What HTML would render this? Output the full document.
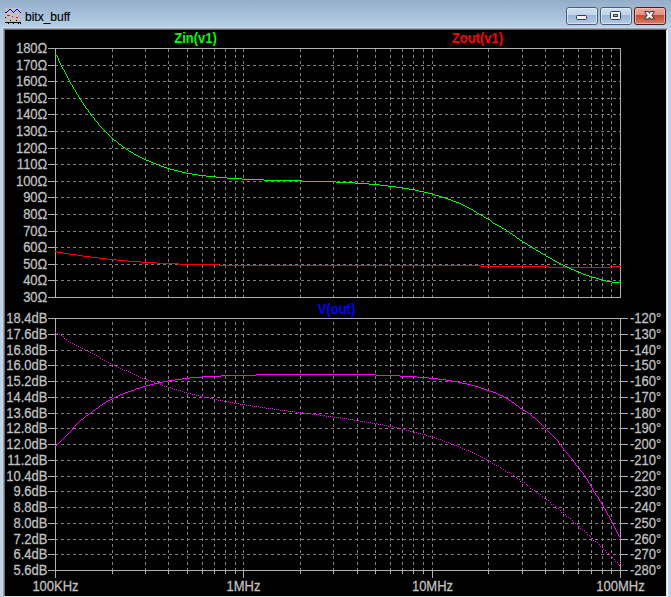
<!DOCTYPE html>
<html><head><meta charset="utf-8"><style>
html,body{margin:0;padding:0;width:671px;height:597px;overflow:hidden;background:#bcd3ea}
svg{position:absolute;left:0;top:0;display:block}
text{font-family:"Liberation Sans",sans-serif}
</style></head><body>
<svg width="671" height="597" viewBox="0 0 671 597">
<defs>
<linearGradient id="tg" x1="0" y1="0" x2="0" y2="1">
<stop offset="0" stop-color="#94adc9"/><stop offset="1" stop-color="#b9d0e8"/>
</linearGradient>
<linearGradient id="bmin" x1="0" y1="0" x2="0" y2="1">
<stop offset="0" stop-color="#cfdff0"/><stop offset="0.45" stop-color="#bfd3ea"/><stop offset="0.46" stop-color="#9ab6d5"/><stop offset="1" stop-color="#b4cbe6"/>
</linearGradient>
<linearGradient id="bcl" x1="0" y1="0" x2="0" y2="1">
<stop offset="0" stop-color="#eaa99b"/><stop offset="0.45" stop-color="#e1907f"/><stop offset="0.46" stop-color="#c14a2e"/><stop offset="1" stop-color="#d8806a"/>
</linearGradient>
</defs>
<rect x="0" y="0" width="671" height="597" fill="#bcd3ea"/>
<rect x="0" y="0" width="671" height="28" fill="url(#tg)"/>
<rect x="2" y="27" width="666" height="570" fill="#c4daf0"/>
<rect x="3" y="28" width="665" height="569" fill="#a0a0a0"/>
<rect x="4" y="29" width="664" height="568" fill="#ffffff"/>
<rect x="4" y="29" width="663" height="567" fill="#696969"/>
<rect x="5" y="30" width="662" height="567" fill="#e3e3e3"/>
<rect x="5" y="30" width="661" height="566" fill="#000"/>
<rect x="5" y="8" width="16" height="16" fill="#c0c0c0"/>
<rect x="6" y="12" width="1" height="1" fill="#0000ff"/>
<rect x="7" y="11" width="1" height="1" fill="#0000ff"/>
<rect x="8" y="10" width="1" height="1" fill="#0000ff"/>
<rect x="9" y="9" width="1" height="1" fill="#0000ff"/>
<rect x="10" y="9" width="1" height="1" fill="#0000ff"/>
<rect x="11" y="10" width="1" height="1" fill="#0000ff"/>
<rect x="12" y="11" width="1" height="1" fill="#0000ff"/>
<rect x="13" y="12" width="1" height="1" fill="#0000ff"/>
<rect x="14" y="11" width="1" height="1" fill="#0000ff"/>
<rect x="15" y="10" width="1" height="1" fill="#0000ff"/>
<rect x="16" y="9" width="1" height="1" fill="#0000ff"/>
<rect x="17" y="9" width="1" height="1" fill="#0000ff"/>
<rect x="18" y="10" width="1" height="1" fill="#0000ff"/>
<rect x="19" y="11" width="1" height="1" fill="#0000ff"/>
<rect x="20" y="12" width="1" height="1" fill="#0000ff"/>
<rect x="5" y="12" width="1" height="1" fill="#000"/>
<rect x="5" y="17" width="1" height="1" fill="#000"/>
<rect x="7" y="15" width="1" height="1" fill="#ff0000"/>
<rect x="8" y="15" width="1" height="1" fill="#ff0000"/>
<rect x="9" y="15" width="1" height="1" fill="#ff0000"/>
<rect x="12" y="16" width="1" height="1" fill="#ff0000"/>
<rect x="16" y="17" width="1" height="1" fill="#ff0000"/>
<rect x="17" y="17" width="1" height="1" fill="#ff0000"/>
<rect x="10" y="20" width="1" height="1" fill="#000080"/>
<rect x="16" y="20" width="1" height="1" fill="#000080"/>
<rect x="5" y="22" width="16" height="1" fill="#000"/>
<rect x="8" y="23" width="1" height="1" fill="#000"/>
<rect x="13" y="23" width="1" height="1" fill="#000"/>
<rect x="18" y="23" width="1" height="1" fill="#000"/>
<rect x="20" y="23" width="1" height="1" fill="#000"/>
<text x="25" y="21" font-size="12" fill="#000" stroke="#000" stroke-width="0.15">bitx_buff</text>
<g>
<rect x="566.5" y="7.5" width="31" height="17" rx="2.5" fill="url(#bmin)" stroke="#4d5b70"/>
<rect x="567.5" y="8.5" width="29" height="15" rx="1.5" fill="none" stroke="#e4eef8" stroke-opacity="0.7"/>
<rect x="600.5" y="7.5" width="31" height="17" rx="2.5" fill="url(#bmin)" stroke="#4d5b70"/>
<rect x="601.5" y="8.5" width="29" height="15" rx="1.5" fill="none" stroke="#e4eef8" stroke-opacity="0.7"/>
<rect x="634.5" y="7.5" width="31" height="17" rx="2.5" fill="url(#bcl)" stroke="#4a1a1e"/>
<rect x="635.5" y="8.5" width="29" height="15" rx="1.5" fill="none" stroke="#f4c8bd" stroke-opacity="0.7"/>
</g>
<rect x="576.5" y="15.5" width="10" height="4" rx="1" fill="#f2f2f0" stroke="#333a48"/>
<rect x="610.5" y="11.5" width="10" height="8" rx="1" fill="#f2f2f0" stroke="#333a48"/>
<rect x="613.5" y="14.5" width="4" height="2" fill="#9ab6d5" stroke="#333a48"/>
<path d="M645.3 12L648.3 12L649.5 13.9L650.7 12L653.7 12L651.3 15.3L653.7 18.6L650.7 18.6L649.5 16.7L648.3 18.6L645.3 18.6L647.7 15.3Z" fill="#f6f6f4" stroke="#3a3440" stroke-width="1.8" stroke-linejoin="round" paint-order="stroke"/>
<g shape-rendering="crispEdges" fill="none">
<path d="M55 65.5H620" stroke="#808080" stroke-dasharray="3 3"/>
<path d="M55 81.5H620" stroke="#808080" stroke-dasharray="3 3"/>
<path d="M55 98.5H620" stroke="#808080" stroke-dasharray="3 3"/>
<path d="M55 114.5H620" stroke="#808080" stroke-dasharray="3 3"/>
<path d="M55 131.5H620" stroke="#808080" stroke-dasharray="3 3"/>
<path d="M55 148.5H620" stroke="#808080" stroke-dasharray="3 3"/>
<path d="M55 164.5H620" stroke="#808080" stroke-dasharray="3 3"/>
<path d="M55 181.5H620" stroke="#808080" stroke-dasharray="3 3"/>
<path d="M55 197.5H620" stroke="#808080" stroke-dasharray="3 3"/>
<path d="M55 214.5H620" stroke="#808080" stroke-dasharray="3 3"/>
<path d="M55 231.5H620" stroke="#808080" stroke-dasharray="3 3"/>
<path d="M55 247.5H620" stroke="#808080" stroke-dasharray="3 3"/>
<path d="M55 264.5H620" stroke="#808080" stroke-dasharray="3 3"/>
<path d="M55 280.5H620" stroke="#808080" stroke-dasharray="3 3"/>
<path d="M112.5 298V48" stroke="#808080" stroke-dasharray="3 3"/>
<path d="M145.5 298V48" stroke="#808080" stroke-dasharray="3 3"/>
<path d="M168.5 298V48" stroke="#808080" stroke-dasharray="3 3"/>
<path d="M187.5 298V48" stroke="#808080" stroke-dasharray="3 3"/>
<path d="M202.5 298V48" stroke="#808080" stroke-dasharray="3 3"/>
<path d="M214.5 298V48" stroke="#808080" stroke-dasharray="3 3"/>
<path d="M225.5 298V48" stroke="#808080" stroke-dasharray="3 3"/>
<path d="M235.5 298V48" stroke="#808080" stroke-dasharray="3 3"/>
<path d="M243.5 298V48" stroke="#808080" stroke-dasharray="3 3"/>
<path d="M300.5 298V48" stroke="#808080" stroke-dasharray="3 3"/>
<path d="M333.5 298V48" stroke="#808080" stroke-dasharray="3 3"/>
<path d="M357.5 298V48" stroke="#808080" stroke-dasharray="3 3"/>
<path d="M375.5 298V48" stroke="#808080" stroke-dasharray="3 3"/>
<path d="M390.5 298V48" stroke="#808080" stroke-dasharray="3 3"/>
<path d="M402.5 298V48" stroke="#808080" stroke-dasharray="3 3"/>
<path d="M413.5 298V48" stroke="#808080" stroke-dasharray="3 3"/>
<path d="M423.5 298V48" stroke="#808080" stroke-dasharray="3 3"/>
<path d="M432.5 298V48" stroke="#808080" stroke-dasharray="3 3"/>
<path d="M488.5 298V48" stroke="#808080" stroke-dasharray="3 3"/>
<path d="M522.5 298V48" stroke="#808080" stroke-dasharray="3 3"/>
<path d="M545.5 298V48" stroke="#808080" stroke-dasharray="3 3"/>
<path d="M563.5 298V48" stroke="#808080" stroke-dasharray="3 3"/>
<path d="M578.5 298V48" stroke="#808080" stroke-dasharray="3 3"/>
<path d="M591.5 298V48" stroke="#808080" stroke-dasharray="3 3"/>
<path d="M602.5 298V48" stroke="#808080" stroke-dasharray="3 3"/>
<path d="M611.5 298V48" stroke="#808080" stroke-dasharray="3 3"/>
<rect x="55.5" y="48.5" width="565" height="249" fill="none" stroke="#b0b0b0"/>
<path d="M48 48.5H55" stroke="#b0b0b0"/>
<path d="M48 65.5H55" stroke="#b0b0b0"/>
<path d="M48 81.5H55" stroke="#b0b0b0"/>
<path d="M48 98.5H55" stroke="#b0b0b0"/>
<path d="M48 114.5H55" stroke="#b0b0b0"/>
<path d="M48 131.5H55" stroke="#b0b0b0"/>
<path d="M48 148.5H55" stroke="#b0b0b0"/>
<path d="M48 164.5H55" stroke="#b0b0b0"/>
<path d="M48 181.5H55" stroke="#b0b0b0"/>
<path d="M48 197.5H55" stroke="#b0b0b0"/>
<path d="M48 214.5H55" stroke="#b0b0b0"/>
<path d="M48 231.5H55" stroke="#b0b0b0"/>
<path d="M48 247.5H55" stroke="#b0b0b0"/>
<path d="M48 264.5H55" stroke="#b0b0b0"/>
<path d="M48 280.5H55" stroke="#b0b0b0"/>
<path d="M48 297.5H55" stroke="#b0b0b0"/>
<path d="M55 334.5H620" stroke="#808080" stroke-dasharray="3 3"/>
<path d="M55 350.5H620" stroke="#808080" stroke-dasharray="3 3"/>
<path d="M55 365.5H620" stroke="#808080" stroke-dasharray="3 3"/>
<path d="M55 381.5H620" stroke="#808080" stroke-dasharray="3 3"/>
<path d="M55 397.5H620" stroke="#808080" stroke-dasharray="3 3"/>
<path d="M55 413.5H620" stroke="#808080" stroke-dasharray="3 3"/>
<path d="M55 428.5H620" stroke="#808080" stroke-dasharray="3 3"/>
<path d="M55 444.5H620" stroke="#808080" stroke-dasharray="3 3"/>
<path d="M55 460.5H620" stroke="#808080" stroke-dasharray="3 3"/>
<path d="M55 476.5H620" stroke="#808080" stroke-dasharray="3 3"/>
<path d="M55 491.5H620" stroke="#808080" stroke-dasharray="3 3"/>
<path d="M55 507.5H620" stroke="#808080" stroke-dasharray="3 3"/>
<path d="M55 523.5H620" stroke="#808080" stroke-dasharray="3 3"/>
<path d="M55 539.5H620" stroke="#808080" stroke-dasharray="3 3"/>
<path d="M55 554.5H620" stroke="#808080" stroke-dasharray="3 3"/>
<path d="M112.5 571V318" stroke="#808080" stroke-dasharray="3 3"/>
<path d="M145.5 571V318" stroke="#808080" stroke-dasharray="3 3"/>
<path d="M168.5 571V318" stroke="#808080" stroke-dasharray="3 3"/>
<path d="M187.5 571V318" stroke="#808080" stroke-dasharray="3 3"/>
<path d="M202.5 571V318" stroke="#808080" stroke-dasharray="3 3"/>
<path d="M214.5 571V318" stroke="#808080" stroke-dasharray="3 3"/>
<path d="M225.5 571V318" stroke="#808080" stroke-dasharray="3 3"/>
<path d="M235.5 571V318" stroke="#808080" stroke-dasharray="3 3"/>
<path d="M243.5 571V318" stroke="#808080" stroke-dasharray="3 3"/>
<path d="M300.5 571V318" stroke="#808080" stroke-dasharray="3 3"/>
<path d="M333.5 571V318" stroke="#808080" stroke-dasharray="3 3"/>
<path d="M357.5 571V318" stroke="#808080" stroke-dasharray="3 3"/>
<path d="M375.5 571V318" stroke="#808080" stroke-dasharray="3 3"/>
<path d="M390.5 571V318" stroke="#808080" stroke-dasharray="3 3"/>
<path d="M402.5 571V318" stroke="#808080" stroke-dasharray="3 3"/>
<path d="M413.5 571V318" stroke="#808080" stroke-dasharray="3 3"/>
<path d="M423.5 571V318" stroke="#808080" stroke-dasharray="3 3"/>
<path d="M432.5 571V318" stroke="#808080" stroke-dasharray="3 3"/>
<path d="M488.5 571V318" stroke="#808080" stroke-dasharray="3 3"/>
<path d="M522.5 571V318" stroke="#808080" stroke-dasharray="3 3"/>
<path d="M545.5 571V318" stroke="#808080" stroke-dasharray="3 3"/>
<path d="M563.5 571V318" stroke="#808080" stroke-dasharray="3 3"/>
<path d="M578.5 571V318" stroke="#808080" stroke-dasharray="3 3"/>
<path d="M591.5 571V318" stroke="#808080" stroke-dasharray="3 3"/>
<path d="M602.5 571V318" stroke="#808080" stroke-dasharray="3 3"/>
<path d="M611.5 571V318" stroke="#808080" stroke-dasharray="3 3"/>
<rect x="55.5" y="318.5" width="565" height="252" fill="none" stroke="#b0b0b0"/>
<path d="M48 318.5H55" stroke="#b0b0b0"/>
<path d="M48 334.5H55" stroke="#b0b0b0"/>
<path d="M48 350.5H55" stroke="#b0b0b0"/>
<path d="M48 365.5H55" stroke="#b0b0b0"/>
<path d="M48 381.5H55" stroke="#b0b0b0"/>
<path d="M48 397.5H55" stroke="#b0b0b0"/>
<path d="M48 413.5H55" stroke="#b0b0b0"/>
<path d="M48 428.5H55" stroke="#b0b0b0"/>
<path d="M48 444.5H55" stroke="#b0b0b0"/>
<path d="M48 460.5H55" stroke="#b0b0b0"/>
<path d="M48 476.5H55" stroke="#b0b0b0"/>
<path d="M48 491.5H55" stroke="#b0b0b0"/>
<path d="M48 507.5H55" stroke="#b0b0b0"/>
<path d="M48 523.5H55" stroke="#b0b0b0"/>
<path d="M48 539.5H55" stroke="#b0b0b0"/>
<path d="M48 554.5H55" stroke="#b0b0b0"/>
<path d="M48 570.5H55" stroke="#b0b0b0"/>
<path d="M621 318.5H628" stroke="#b0b0b0"/>
<path d="M621 334.5H628" stroke="#b0b0b0"/>
<path d="M621 350.5H628" stroke="#b0b0b0"/>
<path d="M621 365.5H628" stroke="#b0b0b0"/>
<path d="M621 381.5H628" stroke="#b0b0b0"/>
<path d="M621 397.5H628" stroke="#b0b0b0"/>
<path d="M621 413.5H628" stroke="#b0b0b0"/>
<path d="M621 428.5H628" stroke="#b0b0b0"/>
<path d="M621 444.5H628" stroke="#b0b0b0"/>
<path d="M621 460.5H628" stroke="#b0b0b0"/>
<path d="M621 476.5H628" stroke="#b0b0b0"/>
<path d="M621 491.5H628" stroke="#b0b0b0"/>
<path d="M621 507.5H628" stroke="#b0b0b0"/>
<path d="M621 523.5H628" stroke="#b0b0b0"/>
<path d="M621 539.5H628" stroke="#b0b0b0"/>
<path d="M621 554.5H628" stroke="#b0b0b0"/>
<path d="M621 570.5H628" stroke="#b0b0b0"/>
<path d="M55.5 571V578" stroke="#b0b0b0"/>
<path d="M112.5 571V574" stroke="#b0b0b0"/>
<path d="M145.5 571V574" stroke="#b0b0b0"/>
<path d="M168.5 571V574" stroke="#b0b0b0"/>
<path d="M187.5 571V574" stroke="#b0b0b0"/>
<path d="M202.5 571V574" stroke="#b0b0b0"/>
<path d="M214.5 571V574" stroke="#b0b0b0"/>
<path d="M225.5 571V574" stroke="#b0b0b0"/>
<path d="M235.5 571V574" stroke="#b0b0b0"/>
<path d="M243.5 571V578" stroke="#b0b0b0"/>
<path d="M300.5 571V574" stroke="#b0b0b0"/>
<path d="M333.5 571V574" stroke="#b0b0b0"/>
<path d="M357.5 571V574" stroke="#b0b0b0"/>
<path d="M375.5 571V574" stroke="#b0b0b0"/>
<path d="M390.5 571V574" stroke="#b0b0b0"/>
<path d="M402.5 571V574" stroke="#b0b0b0"/>
<path d="M413.5 571V574" stroke="#b0b0b0"/>
<path d="M423.5 571V574" stroke="#b0b0b0"/>
<path d="M432.5 571V578" stroke="#b0b0b0"/>
<path d="M488.5 571V574" stroke="#b0b0b0"/>
<path d="M522.5 571V574" stroke="#b0b0b0"/>
<path d="M545.5 571V574" stroke="#b0b0b0"/>
<path d="M563.5 571V574" stroke="#b0b0b0"/>
<path d="M578.5 571V574" stroke="#b0b0b0"/>
<path d="M591.5 571V574" stroke="#b0b0b0"/>
<path d="M602.5 571V574" stroke="#b0b0b0"/>
<path d="M611.5 571V574" stroke="#b0b0b0"/>
<path d="M620.5 571V578" stroke="#b0b0b0"/>
<text transform="translate(47.3,53) scale(1,1.07)" text-anchor="end" fill="#c0c0c0" font-weight="normal" font-size="13" stroke="#c0c0c0" stroke-width="0.25">180Ω</text>
<text transform="translate(47.3,70) scale(1,1.07)" text-anchor="end" fill="#c0c0c0" font-weight="normal" font-size="13" stroke="#c0c0c0" stroke-width="0.25">170Ω</text>
<text transform="translate(47.3,86) scale(1,1.07)" text-anchor="end" fill="#c0c0c0" font-weight="normal" font-size="13" stroke="#c0c0c0" stroke-width="0.25">160Ω</text>
<text transform="translate(47.3,103) scale(1,1.07)" text-anchor="end" fill="#c0c0c0" font-weight="normal" font-size="13" stroke="#c0c0c0" stroke-width="0.25">150Ω</text>
<text transform="translate(47.3,119) scale(1,1.07)" text-anchor="end" fill="#c0c0c0" font-weight="normal" font-size="13" stroke="#c0c0c0" stroke-width="0.25">140Ω</text>
<text transform="translate(47.3,136) scale(1,1.07)" text-anchor="end" fill="#c0c0c0" font-weight="normal" font-size="13" stroke="#c0c0c0" stroke-width="0.25">130Ω</text>
<text transform="translate(47.3,153) scale(1,1.07)" text-anchor="end" fill="#c0c0c0" font-weight="normal" font-size="13" stroke="#c0c0c0" stroke-width="0.25">120Ω</text>
<text transform="translate(47.3,169) scale(1,1.07)" text-anchor="end" fill="#c0c0c0" font-weight="normal" font-size="13" stroke="#c0c0c0" stroke-width="0.25">110Ω</text>
<text transform="translate(47.3,186) scale(1,1.07)" text-anchor="end" fill="#c0c0c0" font-weight="normal" font-size="13" stroke="#c0c0c0" stroke-width="0.25">100Ω</text>
<text transform="translate(47.3,202) scale(1,1.07)" text-anchor="end" fill="#c0c0c0" font-weight="normal" font-size="13" stroke="#c0c0c0" stroke-width="0.25">90Ω</text>
<text transform="translate(47.3,219) scale(1,1.07)" text-anchor="end" fill="#c0c0c0" font-weight="normal" font-size="13" stroke="#c0c0c0" stroke-width="0.25">80Ω</text>
<text transform="translate(47.3,236) scale(1,1.07)" text-anchor="end" fill="#c0c0c0" font-weight="normal" font-size="13" stroke="#c0c0c0" stroke-width="0.25">70Ω</text>
<text transform="translate(47.3,252) scale(1,1.07)" text-anchor="end" fill="#c0c0c0" font-weight="normal" font-size="13" stroke="#c0c0c0" stroke-width="0.25">60Ω</text>
<text transform="translate(47.3,269) scale(1,1.07)" text-anchor="end" fill="#c0c0c0" font-weight="normal" font-size="13" stroke="#c0c0c0" stroke-width="0.25">50Ω</text>
<text transform="translate(47.3,285) scale(1,1.07)" text-anchor="end" fill="#c0c0c0" font-weight="normal" font-size="13" stroke="#c0c0c0" stroke-width="0.25">40Ω</text>
<text transform="translate(47.3,302) scale(1,1.07)" text-anchor="end" fill="#c0c0c0" font-weight="normal" font-size="13" stroke="#c0c0c0" stroke-width="0.25">30Ω</text>
<text transform="translate(47.4,323) scale(1,1.07)" text-anchor="end" fill="#c0c0c0" font-weight="normal" font-size="13" stroke="#c0c0c0" stroke-width="0.25">18.4dB</text>
<text transform="translate(630,323) scale(1,1.07)" text-anchor="start" fill="#c0c0c0" font-weight="normal" font-size="13" stroke="#c0c0c0" stroke-width="0.25">-120°</text>
<text transform="translate(47.4,339) scale(1,1.07)" text-anchor="end" fill="#c0c0c0" font-weight="normal" font-size="13" stroke="#c0c0c0" stroke-width="0.25">17.6dB</text>
<text transform="translate(630,339) scale(1,1.07)" text-anchor="start" fill="#c0c0c0" font-weight="normal" font-size="13" stroke="#c0c0c0" stroke-width="0.25">-130°</text>
<text transform="translate(47.4,355) scale(1,1.07)" text-anchor="end" fill="#c0c0c0" font-weight="normal" font-size="13" stroke="#c0c0c0" stroke-width="0.25">16.8dB</text>
<text transform="translate(630,355) scale(1,1.07)" text-anchor="start" fill="#c0c0c0" font-weight="normal" font-size="13" stroke="#c0c0c0" stroke-width="0.25">-140°</text>
<text transform="translate(47.4,370) scale(1,1.07)" text-anchor="end" fill="#c0c0c0" font-weight="normal" font-size="13" stroke="#c0c0c0" stroke-width="0.25">16.0dB</text>
<text transform="translate(630,370) scale(1,1.07)" text-anchor="start" fill="#c0c0c0" font-weight="normal" font-size="13" stroke="#c0c0c0" stroke-width="0.25">-150°</text>
<text transform="translate(47.4,386) scale(1,1.07)" text-anchor="end" fill="#c0c0c0" font-weight="normal" font-size="13" stroke="#c0c0c0" stroke-width="0.25">15.2dB</text>
<text transform="translate(630,386) scale(1,1.07)" text-anchor="start" fill="#c0c0c0" font-weight="normal" font-size="13" stroke="#c0c0c0" stroke-width="0.25">-160°</text>
<text transform="translate(47.4,402) scale(1,1.07)" text-anchor="end" fill="#c0c0c0" font-weight="normal" font-size="13" stroke="#c0c0c0" stroke-width="0.25">14.4dB</text>
<text transform="translate(630,402) scale(1,1.07)" text-anchor="start" fill="#c0c0c0" font-weight="normal" font-size="13" stroke="#c0c0c0" stroke-width="0.25">-170°</text>
<text transform="translate(47.4,418) scale(1,1.07)" text-anchor="end" fill="#c0c0c0" font-weight="normal" font-size="13" stroke="#c0c0c0" stroke-width="0.25">13.6dB</text>
<text transform="translate(630,418) scale(1,1.07)" text-anchor="start" fill="#c0c0c0" font-weight="normal" font-size="13" stroke="#c0c0c0" stroke-width="0.25">-180°</text>
<text transform="translate(47.4,433) scale(1,1.07)" text-anchor="end" fill="#c0c0c0" font-weight="normal" font-size="13" stroke="#c0c0c0" stroke-width="0.25">12.8dB</text>
<text transform="translate(630,433) scale(1,1.07)" text-anchor="start" fill="#c0c0c0" font-weight="normal" font-size="13" stroke="#c0c0c0" stroke-width="0.25">-190°</text>
<text transform="translate(47.4,449) scale(1,1.07)" text-anchor="end" fill="#c0c0c0" font-weight="normal" font-size="13" stroke="#c0c0c0" stroke-width="0.25">12.0dB</text>
<text transform="translate(630,449) scale(1,1.07)" text-anchor="start" fill="#c0c0c0" font-weight="normal" font-size="13" stroke="#c0c0c0" stroke-width="0.25">-200°</text>
<text transform="translate(47.4,465) scale(1,1.07)" text-anchor="end" fill="#c0c0c0" font-weight="normal" font-size="13" stroke="#c0c0c0" stroke-width="0.25">11.2dB</text>
<text transform="translate(630,465) scale(1,1.07)" text-anchor="start" fill="#c0c0c0" font-weight="normal" font-size="13" stroke="#c0c0c0" stroke-width="0.25">-210°</text>
<text transform="translate(47.4,481) scale(1,1.07)" text-anchor="end" fill="#c0c0c0" font-weight="normal" font-size="13" stroke="#c0c0c0" stroke-width="0.25">10.4dB</text>
<text transform="translate(630,481) scale(1,1.07)" text-anchor="start" fill="#c0c0c0" font-weight="normal" font-size="13" stroke="#c0c0c0" stroke-width="0.25">-220°</text>
<text transform="translate(47.4,496) scale(1,1.07)" text-anchor="end" fill="#c0c0c0" font-weight="normal" font-size="13" stroke="#c0c0c0" stroke-width="0.25">9.6dB</text>
<text transform="translate(630,496) scale(1,1.07)" text-anchor="start" fill="#c0c0c0" font-weight="normal" font-size="13" stroke="#c0c0c0" stroke-width="0.25">-230°</text>
<text transform="translate(47.4,512) scale(1,1.07)" text-anchor="end" fill="#c0c0c0" font-weight="normal" font-size="13" stroke="#c0c0c0" stroke-width="0.25">8.8dB</text>
<text transform="translate(630,512) scale(1,1.07)" text-anchor="start" fill="#c0c0c0" font-weight="normal" font-size="13" stroke="#c0c0c0" stroke-width="0.25">-240°</text>
<text transform="translate(47.4,528) scale(1,1.07)" text-anchor="end" fill="#c0c0c0" font-weight="normal" font-size="13" stroke="#c0c0c0" stroke-width="0.25">8.0dB</text>
<text transform="translate(630,528) scale(1,1.07)" text-anchor="start" fill="#c0c0c0" font-weight="normal" font-size="13" stroke="#c0c0c0" stroke-width="0.25">-250°</text>
<text transform="translate(47.4,544) scale(1,1.07)" text-anchor="end" fill="#c0c0c0" font-weight="normal" font-size="13" stroke="#c0c0c0" stroke-width="0.25">7.2dB</text>
<text transform="translate(630,544) scale(1,1.07)" text-anchor="start" fill="#c0c0c0" font-weight="normal" font-size="13" stroke="#c0c0c0" stroke-width="0.25">-260°</text>
<text transform="translate(47.4,559) scale(1,1.07)" text-anchor="end" fill="#c0c0c0" font-weight="normal" font-size="13" stroke="#c0c0c0" stroke-width="0.25">6.4dB</text>
<text transform="translate(630,559) scale(1,1.07)" text-anchor="start" fill="#c0c0c0" font-weight="normal" font-size="13" stroke="#c0c0c0" stroke-width="0.25">-270°</text>
<text transform="translate(47.4,575) scale(1,1.07)" text-anchor="end" fill="#c0c0c0" font-weight="normal" font-size="13" stroke="#c0c0c0" stroke-width="0.25">5.6dB</text>
<text transform="translate(630,575) scale(1,1.07)" text-anchor="start" fill="#c0c0c0" font-weight="normal" font-size="13" stroke="#c0c0c0" stroke-width="0.25">-280°</text>
<text transform="translate(55.5,591) scale(1,1.07)" text-anchor="middle" fill="#c0c0c0" font-weight="normal" font-size="13" stroke="#c0c0c0" stroke-width="0.25">100KHz</text>
<text transform="translate(243.5,591) scale(1,1.07)" text-anchor="middle" fill="#c0c0c0" font-weight="normal" font-size="13" stroke="#c0c0c0" stroke-width="0.25">1MHz</text>
<text transform="translate(432.5,591) scale(1,1.07)" text-anchor="middle" fill="#c0c0c0" font-weight="normal" font-size="13" stroke="#c0c0c0" stroke-width="0.25">10MHz</text>
<text transform="translate(620.5,591) scale(1,1.07)" text-anchor="middle" fill="#c0c0c0" font-weight="normal" font-size="13" stroke="#c0c0c0" stroke-width="0.25">100MHz</text>
<text transform="translate(195.5,43) scale(1,1.07)" text-anchor="middle" fill="#00ff00" font-weight="bold" font-size="13">Zin(v1)</text>
<text transform="translate(477.5,43) scale(1,1.07)" text-anchor="middle" fill="#ff0000" font-weight="bold" font-size="13">Zout(v1)</text>
<text transform="translate(336.5,314) scale(1,1.07)" text-anchor="middle" fill="#0000ff" font-weight="bold" font-size="13">V(out)</text>
<path d="M55 251h2v1h-2zM57 252h6v1h-6zM63 253h6v1h-6zM69 254h8v1h-8zM77 255h6v1h-6zM83 256h8v1h-8zM91 257h8v1h-8zM99 258h8v1h-8zM107 259h10v1h-10zM117 260h10v1h-10zM127 261h14v1h-14zM141 262h16v1h-16zM157 263h22v1h-22zM179 264h40v1h-40zM219 265h262v1h-262zM481 266h68v1h-68zM549 267h61v1h-61zM610 266h11v1h-11z" fill="#ff0000"/>
<path d="M55 54h1v1h-1zM56 55h1v1h-1zM57 56h1v2h-1zM58 58h1v3h-1zM59 61h1v2h-1zM60 63h1v2h-1zM61 65h1v2h-1zM62 67h1v2h-1zM63 69h1v1h-1zM64 70h1v2h-1zM65 72h1v2h-1zM66 74h1v2h-1zM67 76h1v2h-1zM68 78h1v2h-1zM69 80h1v2h-1zM70 82h1v2h-1zM71 84h1v1h-1zM72 85h1v2h-1zM73 87h1v2h-1zM74 89h1v1h-1zM75 90h1v2h-1zM76 92h1v2h-1zM77 94h1v1h-1zM78 95h1v2h-1zM79 97h1v2h-1zM80 99h1v1h-1zM81 100h1v2h-1zM82 102h1v1h-1zM83 103h1v2h-1zM84 105h1v1h-1zM85 106h1v2h-1zM86 108h1v1h-1zM87 109h1v1h-1zM88 110h1v2h-1zM89 112h1v1h-1zM90 113h1v2h-1zM91 115h1v1h-1zM92 116h1v1h-1zM93 117h1v1h-1zM94 118h1v2h-1zM95 120h1v1h-1zM96 121h1v1h-1zM97 122h1v1h-1zM98 123h1v2h-1zM99 125h1v1h-1zM100 126h1v1h-1zM101 127h1v1h-1zM102 128h1v1h-1zM103 129h1v1h-1zM104 130h1v1h-1zM105 131h1v1h-1zM106 132h1v1h-1zM107 133h1v1h-1zM108 134h1v1h-1zM109 135h1v1h-1zM110 136h1v1h-1zM111 137h1v1h-1zM112 138h1v1h-1zM113 139h1v1h-1zM114 140h1v1h-1zM115 140h1v1h-1zM116 141h1v1h-1zM117 142h1v1h-1zM118 143h1v1h-1zM119 144h1v1h-1zM120 144h1v1h-1zM121 145h1v1h-1zM122 146h1v1h-1zM123 147h1v1h-1zM124 147h1v1h-1zM125 148h1v1h-1zM126 149h1v1h-1zM127 149h1v1h-1zM128 150h1v1h-1zM129 151h1v1h-1zM130 151h1v1h-1zM131 152h1v1h-1zM132 152h1v1h-1zM133 153h1v1h-1zM134 154h1v1h-1zM135 154h1v1h-1zM136 155h1v1h-1zM137 155h1v1h-1zM138 156h1v1h-1zM139 156h1v1h-1zM140 157h1v1h-1zM141 157h1v1h-1zM142 158h1v1h-1zM143 158h1v1h-1zM144 159h1v1h-1zM145 159h1v1h-1zM146 160h1v1h-1zM147 160h1v1h-1zM148 160h1v1h-1zM149 161h1v1h-1zM150 161h1v1h-1zM151 162h1v1h-1zM152 162h1v1h-1zM153 163h1v1h-1zM154 163h1v1h-1zM155 163h1v1h-1zM156 164h1v1h-1zM157 164h1v1h-1zM158 164h1v1h-1zM159 165h1v1h-1zM160 165h1v1h-1zM161 166h1v1h-1zM162 166h1v1h-1zM163 166h1v1h-1zM164 167h1v1h-1zM165 167h1v1h-1zM166 167h1v1h-1zM167 168h1v1h-1zM168 168h1v1h-1zM169 168h1v1h-1zM170 169h1v1h-1zM171 169h1v1h-1zM172 169h1v1h-1zM173 169h1v1h-1zM174 170h1v1h-1zM175 170h1v1h-1zM176 170h1v1h-1zM177 170h1v1h-1zM178 171h1v1h-1zM179 171h1v1h-1zM180 171h1v1h-1zM181 171h1v1h-1zM182 172h1v1h-1zM183 172h1v1h-1zM184 172h1v1h-1zM185 172h1v1h-1zM186 173h1v1h-1zM187 173h1v1h-1zM188 173h1v1h-1zM189 173h1v1h-1zM190 173h1v1h-1zM191 173h1v1h-1zM192 174h1v1h-1zM193 174h1v1h-1zM194 174h1v1h-1zM195 174h1v1h-1zM196 174h1v1h-1zM197 174h1v1h-1zM198 175h1v1h-1zM199 175h1v1h-1zM200 175h1v1h-1zM201 175h1v1h-1zM202 175h1v1h-1zM203 175h1v1h-1zM204 175h1v1h-1zM205 175h1v1h-1zM206 176h1v1h-1zM207 176h1v1h-1zM208 176h1v1h-1zM209 176h1v1h-1zM210 176h1v1h-1zM211 176h1v1h-1zM212 176h1v1h-1zM213 176h1v1h-1zM214 176h1v1h-1zM215 176h1v1h-1zM216 177h1v1h-1zM217 177h1v1h-1zM218 177h1v1h-1zM219 177h1v1h-1zM220 177h1v1h-1zM221 177h1v1h-1zM222 177h1v1h-1zM223 177h1v1h-1zM224 177h1v1h-1zM225 177h1v1h-1zM226 177h1v1h-1zM227 178h1v1h-1zM228 178h1v1h-1zM229 178h1v1h-1zM230 178h1v1h-1zM231 178h1v1h-1zM232 178h1v1h-1zM233 178h1v1h-1zM234 178h1v1h-1zM235 178h1v1h-1zM236 178h1v1h-1zM237 178h1v1h-1zM238 178h1v1h-1zM239 178h1v1h-1zM240 178h1v1h-1zM241 178h1v1h-1zM242 179h1v1h-1zM243 179h1v1h-1zM244 179h1v1h-1zM245 179h1v1h-1zM246 179h1v1h-1zM247 179h1v1h-1zM248 179h1v1h-1zM249 179h1v1h-1zM250 179h1v1h-1zM251 179h1v1h-1zM252 179h1v1h-1zM253 179h1v1h-1zM254 179h1v1h-1zM255 179h1v1h-1zM256 179h1v1h-1zM257 179h1v1h-1zM258 179h1v1h-1zM259 179h1v1h-1zM260 179h1v1h-1zM261 179h1v1h-1zM262 179h1v1h-1zM263 179h1v1h-1zM264 180h1v1h-1zM265 180h1v1h-1zM266 180h1v1h-1zM267 180h1v1h-1zM268 180h1v1h-1zM269 180h1v1h-1zM270 180h1v1h-1zM271 180h1v1h-1zM272 180h1v1h-1zM273 180h1v1h-1zM274 180h1v1h-1zM275 180h1v1h-1zM276 180h1v1h-1zM277 180h1v1h-1zM278 180h1v1h-1zM279 180h1v1h-1zM280 180h1v1h-1zM281 180h1v1h-1zM282 180h1v1h-1zM283 180h1v1h-1zM284 180h1v1h-1zM285 180h1v1h-1zM286 180h1v1h-1zM287 180h1v1h-1zM288 180h1v1h-1zM289 180h1v1h-1zM290 180h1v1h-1zM291 180h1v1h-1zM292 180h1v1h-1zM293 180h1v1h-1zM294 180h1v1h-1zM295 180h1v1h-1zM296 180h1v1h-1zM297 180h1v1h-1zM298 180h1v1h-1zM299 180h1v1h-1zM300 180h1v1h-1zM301 180h1v1h-1zM302 181h1v1h-1zM303 181h1v1h-1zM304 181h1v1h-1zM305 181h1v1h-1zM306 181h1v1h-1zM307 181h1v1h-1zM308 181h1v1h-1zM309 181h1v1h-1zM310 181h1v1h-1zM311 181h1v1h-1zM312 181h1v1h-1zM313 181h1v1h-1zM314 181h1v1h-1zM315 181h1v1h-1zM316 181h1v1h-1zM317 181h1v1h-1zM318 181h1v1h-1zM319 181h1v1h-1zM320 181h1v1h-1zM321 181h1v1h-1zM322 181h1v1h-1zM323 181h1v1h-1zM324 181h1v1h-1zM325 181h1v1h-1zM326 181h1v1h-1zM327 181h1v1h-1zM328 181h1v1h-1zM329 181h1v1h-1zM330 181h1v1h-1zM331 181h1v1h-1zM332 181h1v1h-1zM333 181h1v1h-1zM334 181h1v1h-1zM335 181h1v1h-1zM336 182h1v1h-1zM337 182h1v1h-1zM338 182h1v1h-1zM339 182h1v1h-1zM340 182h1v1h-1zM341 182h1v1h-1zM342 182h1v1h-1zM343 182h1v1h-1zM344 182h1v1h-1zM345 182h1v1h-1zM346 182h1v1h-1zM347 182h1v1h-1zM348 182h1v1h-1zM349 182h1v1h-1zM350 182h1v1h-1zM351 182h1v1h-1zM352 182h1v1h-1zM353 182h1v1h-1zM354 182h1v1h-1zM355 183h1v1h-1zM356 183h1v1h-1zM357 183h1v1h-1zM358 183h1v1h-1zM359 183h1v1h-1zM360 183h1v1h-1zM361 183h1v1h-1zM362 183h1v1h-1zM363 183h1v1h-1zM364 183h1v1h-1zM365 183h1v1h-1zM366 183h1v1h-1zM367 183h1v1h-1zM368 183h1v1h-1zM369 184h1v1h-1zM370 184h1v1h-1zM371 184h1v1h-1zM372 184h1v1h-1zM373 184h1v1h-1zM374 184h1v1h-1zM375 184h1v1h-1zM376 184h1v1h-1zM377 184h1v1h-1zM378 184h1v1h-1zM379 184h1v1h-1zM380 185h1v1h-1zM381 185h1v1h-1zM382 185h1v1h-1zM383 185h1v1h-1zM384 185h1v1h-1zM385 185h1v1h-1zM386 185h1v1h-1zM387 185h1v1h-1zM388 186h1v1h-1zM389 186h1v1h-1zM390 186h1v1h-1zM391 186h1v1h-1zM392 186h1v1h-1zM393 186h1v1h-1zM394 186h1v1h-1zM395 186h1v1h-1zM396 187h1v1h-1zM397 187h1v1h-1zM398 187h1v1h-1zM399 187h1v1h-1zM400 187h1v1h-1zM401 187h1v1h-1zM402 187h1v1h-1zM403 188h1v1h-1zM404 188h1v1h-1zM405 188h1v1h-1zM406 188h1v1h-1zM407 188h1v1h-1zM408 188h1v1h-1zM409 189h1v1h-1zM410 189h1v1h-1zM411 189h1v1h-1zM412 189h1v1h-1zM413 189h1v1h-1zM414 189h1v1h-1zM415 190h1v1h-1zM416 190h1v1h-1zM417 190h1v1h-1zM418 190h1v1h-1zM419 191h1v1h-1zM420 191h1v1h-1zM421 191h1v1h-1zM422 191h1v1h-1zM423 191h1v1h-1zM424 192h1v1h-1zM425 192h1v1h-1zM426 192h1v1h-1zM427 192h1v1h-1zM428 193h1v1h-1zM429 193h1v1h-1zM430 193h1v1h-1zM431 193h1v1h-1zM432 194h1v1h-1zM433 194h1v1h-1zM434 194h1v1h-1zM435 195h1v1h-1zM436 195h1v1h-1zM437 195h1v1h-1zM438 195h1v1h-1zM439 196h1v1h-1zM440 196h1v1h-1zM441 196h1v1h-1zM442 197h1v1h-1zM443 197h1v1h-1zM444 197h1v1h-1zM445 198h1v1h-1zM446 198h1v1h-1zM447 198h1v1h-1zM448 199h1v1h-1zM449 199h1v1h-1zM450 199h1v1h-1zM451 200h1v1h-1zM452 200h1v1h-1zM453 201h1v1h-1zM454 201h1v1h-1zM455 201h1v1h-1zM456 202h1v1h-1zM457 202h1v1h-1zM458 202h1v1h-1zM459 203h1v1h-1zM460 203h1v1h-1zM461 204h1v1h-1zM462 204h1v1h-1zM463 205h1v1h-1zM464 205h1v1h-1zM465 206h1v1h-1zM466 206h1v1h-1zM467 207h1v1h-1zM468 207h1v1h-1zM469 208h1v1h-1zM470 208h1v1h-1zM471 209h1v1h-1zM472 209h1v1h-1zM473 210h1v1h-1zM474 211h1v1h-1zM475 211h1v1h-1zM476 212h1v1h-1zM477 213h1v1h-1zM478 213h1v1h-1zM479 214h1v1h-1zM480 214h1v1h-1zM481 215h1v1h-1zM482 215h1v1h-1zM483 216h1v1h-1zM484 217h1v1h-1zM485 217h1v1h-1zM486 218h1v1h-1zM487 218h1v1h-1zM488 219h1v1h-1zM489 219h1v1h-1zM490 220h1v1h-1zM491 221h1v1h-1zM492 222h1v1h-1zM493 223h1v1h-1zM494 223h1v1h-1zM495 224h1v1h-1zM496 224h1v1h-1zM497 225h1v1h-1zM498 225h1v1h-1zM499 226h1v1h-1zM500 226h1v1h-1zM501 227h1v1h-1zM502 228h1v1h-1zM503 228h1v1h-1zM504 229h1v1h-1zM505 229h1v1h-1zM506 230h1v1h-1zM507 231h1v1h-1zM508 231h1v1h-1zM509 232h1v1h-1zM510 233h1v1h-1zM511 233h1v1h-1zM512 234h1v1h-1zM513 235h1v1h-1zM514 235h1v1h-1zM515 236h1v1h-1zM516 237h1v1h-1zM517 238h1v1h-1zM518 238h1v1h-1zM519 239h1v1h-1zM520 240h1v1h-1zM521 240h1v1h-1zM522 241h1v1h-1zM523 242h1v1h-1zM524 242h1v1h-1zM525 243h1v1h-1zM526 243h1v1h-1zM527 244h1v1h-1zM528 245h1v1h-1zM529 245h1v1h-1zM530 246h1v1h-1zM531 246h1v1h-1zM532 247h1v1h-1zM533 248h1v1h-1zM534 248h1v1h-1zM535 249h1v1h-1zM536 250h1v1h-1zM537 250h1v1h-1zM538 251h1v1h-1zM539 251h1v1h-1zM540 252h1v1h-1zM541 253h1v1h-1zM542 253h1v1h-1zM543 254h1v1h-1zM544 254h1v1h-1zM545 255h1v1h-1zM546 256h1v1h-1zM547 256h1v1h-1zM548 257h1v1h-1zM549 257h1v1h-1zM550 258h1v1h-1zM551 258h1v1h-1zM552 259h1v1h-1zM553 260h1v1h-1zM554 260h1v1h-1zM555 261h1v1h-1zM556 261h1v1h-1zM557 262h1v1h-1zM558 262h1v1h-1zM559 263h1v1h-1zM560 263h1v1h-1zM561 264h1v1h-1zM562 264h1v1h-1zM563 265h1v1h-1zM564 265h1v1h-1zM565 266h1v1h-1zM566 266h1v1h-1zM567 267h1v1h-1zM568 267h1v1h-1zM569 268h1v1h-1zM570 268h1v1h-1zM571 269h1v1h-1zM572 269h1v1h-1zM573 269h1v1h-1zM574 270h1v1h-1zM575 270h1v1h-1zM576 271h1v1h-1zM577 271h1v1h-1zM578 272h1v1h-1zM579 272h1v1h-1zM580 272h1v1h-1zM581 273h1v1h-1zM582 273h1v1h-1zM583 274h1v1h-1zM584 274h1v1h-1zM585 274h1v1h-1zM586 275h1v1h-1zM587 275h1v1h-1zM588 275h1v1h-1zM589 276h1v1h-1zM590 276h1v1h-1zM591 276h1v1h-1zM592 277h1v1h-1zM593 277h1v1h-1zM594 277h1v1h-1zM595 277h1v1h-1zM596 278h1v1h-1zM597 278h1v1h-1zM598 278h1v1h-1zM599 279h1v1h-1zM600 279h1v1h-1zM601 279h1v1h-1zM602 280h1v1h-1zM603 280h1v1h-1zM604 280h1v1h-1zM605 280h1v1h-1zM606 281h1v1h-1zM607 281h1v1h-1zM608 281h1v1h-1zM609 281h1v1h-1zM610 281h1v1h-1zM611 281h1v1h-1zM612 282h1v1h-1zM613 282h1v1h-1zM614 282h1v1h-1zM615 282h1v1h-1zM616 282h1v1h-1zM617 282h1v1h-1zM618 282h1v1h-1zM619 282h1v1h-1zM620 282h1v1h-1z" fill="#00ff00"/>
<path d="M55 445h1v1h-1zM56 445h1v1h-1zM57 444h1v1h-1zM58 443h1v1h-1zM59 442h1v1h-1zM60 441h1v1h-1zM61 440h1v1h-1zM62 439h1v1h-1zM63 438h1v1h-1zM64 437h1v1h-1zM65 436h1v1h-1zM66 435h1v1h-1zM67 434h1v1h-1zM68 433h1v1h-1zM69 432h1v1h-1zM70 431h1v1h-1zM71 430h1v1h-1zM72 428h1v2h-1zM73 427h1v1h-1zM74 426h1v1h-1zM75 425h1v1h-1zM76 424h1v1h-1zM77 423h1v1h-1zM78 422h1v1h-1zM79 421h1v1h-1zM80 420h1v1h-1zM81 419h1v1h-1zM82 419h1v1h-1zM83 418h1v1h-1zM84 417h1v1h-1zM85 416h1v1h-1zM86 415h1v1h-1zM87 415h1v1h-1zM88 414h1v1h-1zM89 413h1v1h-1zM90 413h1v1h-1zM91 412h1v1h-1zM92 411h1v1h-1zM93 410h1v1h-1zM94 410h1v1h-1zM95 409h1v1h-1zM96 408h1v1h-1zM97 408h1v1h-1zM98 407h1v1h-1zM99 406h1v1h-1zM100 405h1v1h-1zM101 405h1v1h-1zM102 404h1v1h-1zM103 403h1v1h-1zM104 403h1v1h-1zM105 402h1v1h-1zM106 401h1v1h-1zM107 401h1v1h-1zM108 400h1v1h-1zM109 400h1v1h-1zM110 399h1v1h-1zM111 399h1v1h-1zM112 398h1v1h-1zM113 398h1v1h-1zM114 397h1v1h-1zM115 397h1v1h-1zM116 396h1v1h-1zM117 396h1v1h-1zM118 395h1v1h-1zM119 395h1v1h-1zM120 394h1v1h-1zM121 394h1v1h-1zM122 394h1v1h-1zM123 393h1v1h-1zM124 393h1v1h-1zM125 392h1v1h-1zM126 392h1v1h-1zM127 392h1v1h-1zM128 391h1v1h-1zM129 391h1v1h-1zM130 391h1v1h-1zM131 390h1v1h-1zM132 390h1v1h-1zM133 390h1v1h-1zM134 389h1v1h-1zM135 389h1v1h-1zM136 388h1v1h-1zM137 388h1v1h-1zM138 388h1v1h-1zM139 388h1v1h-1zM140 387h1v1h-1zM141 387h1v1h-1zM142 387h1v1h-1zM143 386h1v1h-1zM144 386h1v1h-1zM145 386h1v1h-1zM146 385h1v1h-1zM147 385h1v1h-1zM148 385h1v1h-1zM149 385h1v1h-1zM150 384h1v1h-1zM151 384h1v1h-1zM152 384h1v1h-1zM153 384h1v1h-1zM154 383h1v1h-1zM155 383h1v1h-1zM156 383h1v1h-1zM157 383h1v1h-1zM158 382h1v1h-1zM159 382h1v1h-1zM160 382h1v1h-1zM161 382h1v1h-1zM162 382h1v1h-1zM163 381h1v1h-1zM164 381h1v1h-1zM165 381h1v1h-1zM166 381h1v1h-1zM167 381h1v1h-1zM168 380h1v1h-1zM169 380h1v1h-1zM170 380h1v1h-1zM171 380h1v1h-1zM172 380h1v1h-1zM173 380h1v1h-1zM174 380h1v1h-1zM175 379h1v1h-1zM176 379h1v1h-1zM177 379h1v1h-1zM178 379h1v1h-1zM179 379h1v1h-1zM180 379h1v1h-1zM181 379h1v1h-1zM182 378h1v1h-1zM183 378h1v1h-1zM184 378h1v1h-1zM185 378h1v1h-1zM186 378h1v1h-1zM187 378h1v1h-1zM188 378h1v1h-1zM189 378h1v1h-1zM190 377h1v1h-1zM191 377h1v1h-1zM192 377h1v1h-1zM193 377h1v1h-1zM194 377h1v1h-1zM195 377h1v1h-1zM196 377h1v1h-1zM197 377h1v1h-1zM198 377h1v1h-1zM199 377h1v1h-1zM200 377h1v1h-1zM201 377h1v1h-1zM202 376h1v1h-1zM203 376h1v1h-1zM204 376h1v1h-1zM205 376h1v1h-1zM206 376h1v1h-1zM207 376h1v1h-1zM208 376h1v1h-1zM209 376h1v1h-1zM210 376h1v1h-1zM211 376h1v1h-1zM212 376h1v1h-1zM213 376h1v1h-1zM214 376h1v1h-1zM215 376h1v1h-1zM216 376h1v1h-1zM217 376h1v1h-1zM218 376h1v1h-1zM219 376h1v1h-1zM220 376h1v1h-1zM221 375h1v1h-1zM222 375h1v1h-1zM223 375h1v1h-1zM224 375h1v1h-1zM225 375h1v1h-1zM226 375h1v1h-1zM227 375h1v1h-1zM228 375h1v1h-1zM229 375h1v1h-1zM230 375h1v1h-1zM231 375h1v1h-1zM232 375h1v1h-1zM233 375h1v1h-1zM234 375h1v1h-1zM235 375h1v1h-1zM236 375h1v1h-1zM237 375h1v1h-1zM238 375h1v1h-1zM239 375h1v1h-1zM240 375h1v1h-1zM241 375h1v1h-1zM242 375h1v1h-1zM243 375h1v1h-1zM244 375h1v1h-1zM245 375h1v1h-1zM246 375h1v1h-1zM247 375h1v1h-1zM248 375h1v1h-1zM249 375h1v1h-1zM250 375h1v1h-1zM251 375h1v1h-1zM252 375h1v1h-1zM253 375h1v1h-1zM254 375h1v1h-1zM255 375h1v1h-1zM256 374h1v1h-1zM257 374h1v1h-1zM258 374h1v1h-1zM259 374h1v1h-1zM260 374h1v1h-1zM261 374h1v1h-1zM262 374h1v1h-1zM263 374h1v1h-1zM264 374h1v1h-1zM265 374h1v1h-1zM266 374h1v1h-1zM267 374h1v1h-1zM268 374h1v1h-1zM269 374h1v1h-1zM270 374h1v1h-1zM271 374h1v1h-1zM272 374h1v1h-1zM273 374h1v1h-1zM274 374h1v1h-1zM275 374h1v1h-1zM276 374h1v1h-1zM277 374h1v1h-1zM278 374h1v1h-1zM279 374h1v1h-1zM280 374h1v1h-1zM281 374h1v1h-1zM282 374h1v1h-1zM283 374h1v1h-1zM284 374h1v1h-1zM285 374h1v1h-1zM286 374h1v1h-1zM287 374h1v1h-1zM288 374h1v1h-1zM289 374h1v1h-1zM290 374h1v1h-1zM291 374h1v1h-1zM292 374h1v1h-1zM293 374h1v1h-1zM294 374h1v1h-1zM295 374h1v1h-1zM296 374h1v1h-1zM297 374h1v1h-1zM298 374h1v1h-1zM299 374h1v1h-1zM300 374h1v1h-1zM301 374h1v1h-1zM302 374h1v1h-1zM303 374h1v1h-1zM304 374h1v1h-1zM305 374h1v1h-1zM306 374h1v1h-1zM307 374h1v1h-1zM308 374h1v1h-1zM309 374h1v1h-1zM310 374h1v1h-1zM311 374h1v1h-1zM312 374h1v1h-1zM313 374h1v1h-1zM314 374h1v1h-1zM315 374h1v1h-1zM316 374h1v1h-1zM317 374h1v1h-1zM318 374h1v1h-1zM319 374h1v1h-1zM320 374h1v1h-1zM321 374h1v1h-1zM322 374h1v1h-1zM323 374h1v1h-1zM324 374h1v1h-1zM325 374h1v1h-1zM326 374h1v1h-1zM327 374h1v1h-1zM328 374h1v1h-1zM329 374h1v1h-1zM330 374h1v1h-1zM331 374h1v1h-1zM332 374h1v1h-1zM333 374h1v1h-1zM334 374h1v1h-1zM335 374h1v1h-1zM336 374h1v1h-1zM337 374h1v1h-1zM338 374h1v1h-1zM339 374h1v1h-1zM340 374h1v1h-1zM341 374h1v1h-1zM342 374h1v1h-1zM343 374h1v1h-1zM344 374h1v1h-1zM345 374h1v1h-1zM346 374h1v1h-1zM347 374h1v1h-1zM348 374h1v1h-1zM349 374h1v1h-1zM350 374h1v1h-1zM351 374h1v1h-1zM352 374h1v1h-1zM353 374h1v1h-1zM354 374h1v1h-1zM355 374h1v1h-1zM356 374h1v1h-1zM357 374h1v1h-1zM358 374h1v1h-1zM359 374h1v1h-1zM360 374h1v1h-1zM361 374h1v1h-1zM362 374h1v1h-1zM363 374h1v1h-1zM364 374h1v1h-1zM365 374h1v1h-1zM366 374h1v1h-1zM367 374h1v1h-1zM368 374h1v1h-1zM369 374h1v1h-1zM370 374h1v1h-1zM371 374h1v1h-1zM372 374h1v1h-1zM373 374h1v1h-1zM374 374h1v1h-1zM375 374h1v1h-1zM376 375h1v1h-1zM377 375h1v1h-1zM378 375h1v1h-1zM379 375h1v1h-1zM380 375h1v1h-1zM381 375h1v1h-1zM382 375h1v1h-1zM383 375h1v1h-1zM384 375h1v1h-1zM385 375h1v1h-1zM386 375h1v1h-1zM387 375h1v1h-1zM388 375h1v1h-1zM389 375h1v1h-1zM390 375h1v1h-1zM391 375h1v1h-1zM392 375h1v1h-1zM393 375h1v1h-1zM394 375h1v1h-1zM395 375h1v1h-1zM396 375h1v1h-1zM397 375h1v1h-1zM398 375h1v1h-1zM399 375h1v1h-1zM400 376h1v1h-1zM401 376h1v1h-1zM402 376h1v1h-1zM403 376h1v1h-1zM404 376h1v1h-1zM405 376h1v1h-1zM406 376h1v1h-1zM407 376h1v1h-1zM408 376h1v1h-1zM409 376h1v1h-1zM410 376h1v1h-1zM411 376h1v1h-1zM412 376h1v1h-1zM413 376h1v1h-1zM414 376h1v1h-1zM415 376h1v1h-1zM416 376h1v1h-1zM417 377h1v1h-1zM418 377h1v1h-1zM419 377h1v1h-1zM420 377h1v1h-1zM421 377h1v1h-1zM422 377h1v1h-1zM423 377h1v1h-1zM424 377h1v1h-1zM425 377h1v1h-1zM426 377h1v1h-1zM427 377h1v1h-1zM428 377h1v1h-1zM429 378h1v1h-1zM430 378h1v1h-1zM431 378h1v1h-1zM432 378h1v1h-1zM433 378h1v1h-1zM434 378h1v1h-1zM435 378h1v1h-1zM436 378h1v1h-1zM437 378h1v1h-1zM438 379h1v1h-1zM439 379h1v1h-1zM440 379h1v1h-1zM441 379h1v1h-1zM442 379h1v1h-1zM443 379h1v1h-1zM444 379h1v1h-1zM445 379h1v1h-1zM446 380h1v1h-1zM447 380h1v1h-1zM448 380h1v1h-1zM449 380h1v1h-1zM450 380h1v1h-1zM451 380h1v1h-1zM452 381h1v1h-1zM453 381h1v1h-1zM454 381h1v1h-1zM455 381h1v1h-1zM456 381h1v1h-1zM457 381h1v1h-1zM458 382h1v1h-1zM459 382h1v1h-1zM460 382h1v1h-1zM461 382h1v1h-1zM462 383h1v1h-1zM463 383h1v1h-1zM464 383h1v1h-1zM465 383h1v1h-1zM466 383h1v1h-1zM467 384h1v1h-1zM468 384h1v1h-1zM469 384h1v1h-1zM470 384h1v1h-1zM471 385h1v1h-1zM472 385h1v1h-1zM473 385h1v1h-1zM474 385h1v1h-1zM475 386h1v1h-1zM476 386h1v1h-1zM477 386h1v1h-1zM478 387h1v1h-1zM479 387h1v1h-1zM480 387h1v1h-1zM481 388h1v1h-1zM482 388h1v1h-1zM483 388h1v1h-1zM484 389h1v1h-1zM485 389h1v1h-1zM486 389h1v1h-1zM487 390h1v1h-1zM488 390h1v1h-1zM489 390h1v1h-1zM490 391h1v1h-1zM491 391h1v1h-1zM492 391h1v1h-1zM493 392h1v1h-1zM494 392h1v1h-1zM495 392h1v1h-1zM496 393h1v1h-1zM497 393h1v1h-1zM498 394h1v1h-1zM499 394h1v1h-1zM500 395h1v1h-1zM501 395h1v1h-1zM502 395h1v1h-1zM503 396h1v1h-1zM504 397h1v1h-1zM505 397h1v1h-1zM506 398h1v1h-1zM507 398h1v1h-1zM508 399h1v1h-1zM509 400h1v1h-1zM510 400h1v1h-1zM511 401h1v1h-1zM512 402h1v1h-1zM513 402h1v1h-1zM514 403h1v1h-1zM515 404h1v1h-1zM516 405h1v1h-1zM517 405h1v1h-1zM518 406h1v1h-1zM519 407h1v1h-1zM520 408h1v1h-1zM521 408h1v1h-1zM522 409h1v1h-1zM523 410h1v1h-1zM524 410h1v1h-1zM525 411h1v1h-1zM526 411h1v1h-1zM527 412h1v1h-1zM528 413h1v1h-1zM529 413h1v1h-1zM530 414h1v1h-1zM531 415h1v1h-1zM532 416h1v1h-1zM533 417h1v1h-1zM534 417h1v1h-1zM535 418h1v1h-1zM536 419h1v1h-1zM537 420h1v1h-1zM538 421h1v1h-1zM539 422h1v1h-1zM540 423h1v1h-1zM541 424h1v1h-1zM542 425h1v1h-1zM543 426h1v1h-1zM544 427h1v1h-1zM545 428h1v1h-1zM546 429h1v1h-1zM547 430h1v1h-1zM548 431h1v1h-1zM549 432h1v1h-1zM550 433h1v1h-1zM551 434h1v1h-1zM552 435h1v1h-1zM553 436h1v1h-1zM554 437h1v1h-1zM555 438h1v1h-1zM556 439h1v1h-1zM557 440h1v1h-1zM558 441h1v2h-1zM559 443h1v1h-1zM560 444h1v1h-1zM561 445h1v2h-1zM562 447h1v1h-1zM563 448h1v2h-1zM564 450h1v1h-1zM565 451h1v1h-1zM566 452h1v1h-1zM567 453h1v1h-1zM568 454h1v1h-1zM569 455h1v2h-1zM570 457h1v1h-1zM571 458h1v1h-1zM572 459h1v2h-1zM573 461h1v1h-1zM574 462h1v1h-1zM575 463h1v2h-1zM576 465h1v1h-1zM577 466h1v1h-1zM578 467h1v1h-1zM579 468h1v2h-1zM580 470h1v1h-1zM581 471h1v1h-1zM582 472h1v1h-1zM583 473h1v2h-1zM584 475h1v1h-1zM585 476h1v2h-1zM586 478h1v1h-1zM587 479h1v2h-1zM588 481h1v2h-1zM589 483h1v1h-1zM590 484h1v2h-1zM591 486h1v2h-1zM592 488h1v2h-1zM593 490h1v2h-1zM594 492h1v1h-1zM595 493h1v2h-1zM596 495h1v1h-1zM597 496h1v1h-1zM598 497h1v2h-1zM599 499h1v2h-1zM600 501h1v1h-1zM601 502h1v2h-1zM602 504h1v2h-1zM603 506h1v2h-1zM604 508h1v1h-1zM605 509h1v2h-1zM606 511h1v2h-1zM607 513h1v2h-1zM608 515h1v1h-1zM609 516h1v2h-1zM610 518h1v2h-1zM611 520h1v2h-1zM612 522h1v2h-1zM613 524h1v2h-1zM614 526h1v2h-1zM615 528h1v2h-1zM616 530h1v2h-1zM617 532h1v2h-1zM618 534h1v2h-1zM619 536h1v1h-1zM620 537h1v2h-1z" fill="#ff00ff"/>
<path d="M55 332h1v1h-1zM57 333h1v1h-1zM59 334h1v1h-1zM61 335h1v1h-1zM63 336h1v1h-1zM64 338h1v1h-1zM66 339h1v1h-1zM68 341h1v1h-1zM70 342h1v1h-1zM72 343h1v1h-1zM74 344h1v1h-1zM76 345h1v1h-1zM78 346h1v1h-1zM80 347h1v1h-1zM82 348h1v1h-1zM84 349h1v1h-1zM86 350h1v1h-1zM88 351h1v1h-1zM90 352h1v1h-1zM92 353h1v1h-1zM94 354h1v1h-1zM96 355h1v1h-1zM98 356h1v1h-1zM100 358h1v1h-1zM102 359h1v1h-1zM104 360h1v1h-1zM106 361h1v1h-1zM108 362h1v1h-1zM110 363h1v1h-1zM112 364h1v1h-1zM114 365h1v1h-1zM116 366h1v1h-1zM118 367h1v1h-1zM120 368h1v1h-1zM122 369h1v1h-1zM124 370h1v1h-1zM126 370h1v1h-1zM128 371h1v1h-1zM130 372h1v1h-1zM132 373h1v1h-1zM134 374h1v1h-1zM136 375h1v1h-1zM138 376h1v1h-1zM140 377h1v1h-1zM142 378h1v1h-1zM144 378h1v1h-1zM146 379h1v1h-1zM148 380h1v1h-1zM150 380h1v1h-1zM152 381h1v1h-1zM154 382h1v1h-1zM156 383h1v1h-1zM158 383h1v1h-1zM160 384h1v1h-1zM162 385h1v1h-1zM164 386h1v1h-1zM166 386h1v1h-1zM168 387h1v1h-1zM170 387h1v1h-1zM172 388h1v1h-1zM174 389h1v1h-1zM176 389h1v1h-1zM178 390h1v1h-1zM180 390h1v1h-1zM182 391h1v1h-1zM184 392h1v1h-1zM186 392h1v1h-1zM188 393h1v1h-1zM190 393h1v1h-1zM192 394h1v1h-1zM194 394h1v1h-1zM196 395h1v1h-1zM198 395h1v1h-1zM200 396h1v1h-1zM202 396h1v1h-1zM204 397h1v1h-1zM206 397h1v1h-1zM208 397h1v1h-1zM210 398h1v1h-1zM212 398h1v1h-1zM214 399h1v1h-1zM216 399h1v1h-1zM218 400h1v1h-1zM220 400h1v1h-1zM222 400h1v1h-1zM224 401h1v1h-1zM226 401h1v1h-1zM228 401h1v1h-1zM230 402h1v1h-1zM232 402h1v1h-1zM234 403h1v1h-1zM236 403h1v1h-1zM238 403h1v1h-1zM240 404h1v1h-1zM242 404h1v1h-1zM244 404h1v1h-1zM246 405h1v1h-1zM248 405h1v1h-1zM250 405h1v1h-1zM252 406h1v1h-1zM254 406h1v1h-1zM256 406h1v1h-1zM258 406h1v1h-1zM260 407h1v1h-1zM262 407h1v1h-1zM264 407h1v1h-1zM266 408h1v1h-1zM268 408h1v1h-1zM270 408h1v1h-1zM272 408h1v1h-1zM274 409h1v1h-1zM276 409h1v1h-1zM278 409h1v1h-1zM280 410h1v1h-1zM282 410h1v1h-1zM284 410h1v1h-1zM286 410h1v1h-1zM288 411h1v1h-1zM290 411h1v1h-1zM292 411h1v1h-1zM294 411h1v1h-1zM296 412h1v1h-1zM298 412h1v1h-1zM300 412h1v1h-1zM302 412h1v1h-1zM304 413h1v1h-1zM306 413h1v1h-1zM308 413h1v1h-1zM310 413h1v1h-1zM312 414h1v1h-1zM314 414h1v1h-1zM316 414h1v1h-1zM318 414h1v1h-1zM320 415h1v1h-1zM322 415h1v1h-1zM324 415h1v1h-1zM326 416h1v1h-1zM328 416h1v1h-1zM330 416h1v1h-1zM332 416h1v1h-1zM334 417h1v1h-1zM336 417h1v1h-1zM338 417h1v1h-1zM340 417h1v1h-1zM342 418h1v1h-1zM344 418h1v1h-1zM346 418h1v1h-1zM348 419h1v1h-1zM350 419h1v1h-1zM352 419h1v1h-1zM354 420h1v1h-1zM356 420h1v1h-1zM358 420h1v1h-1zM360 421h1v1h-1zM362 421h1v1h-1zM364 421h1v1h-1zM366 422h1v1h-1zM368 422h1v1h-1zM370 422h1v1h-1zM372 423h1v1h-1zM374 423h1v1h-1zM376 423h1v1h-1zM378 424h1v1h-1zM380 424h1v1h-1zM382 424h1v1h-1zM384 425h1v1h-1zM386 425h1v1h-1zM388 426h1v1h-1zM390 426h1v1h-1zM392 426h1v1h-1zM394 427h1v1h-1zM396 427h1v1h-1zM398 428h1v1h-1zM400 428h1v1h-1zM402 429h1v1h-1zM404 429h1v1h-1zM406 430h1v1h-1zM408 430h1v1h-1zM410 431h1v1h-1zM412 431h1v1h-1zM414 432h1v1h-1zM416 432h1v1h-1zM418 433h1v1h-1zM420 433h1v1h-1zM422 434h1v1h-1zM424 434h1v1h-1zM426 435h1v1h-1zM428 436h1v1h-1zM430 436h1v1h-1zM432 437h1v1h-1zM434 437h1v1h-1zM436 438h1v1h-1zM438 439h1v1h-1zM440 439h1v1h-1zM442 440h1v1h-1zM444 441h1v1h-1zM446 442h1v1h-1zM448 442h1v1h-1zM450 443h1v1h-1zM452 444h1v1h-1zM454 445h1v1h-1zM456 445h1v1h-1zM458 446h1v1h-1zM460 447h1v1h-1zM462 448h1v1h-1zM464 449h1v1h-1zM466 450h1v1h-1zM468 450h1v1h-1zM470 451h1v1h-1zM472 452h1v1h-1zM474 453h1v1h-1zM476 454h1v1h-1zM478 455h1v1h-1zM480 456h1v1h-1zM482 457h1v1h-1zM484 458h1v1h-1zM486 459h1v1h-1zM488 460h1v1h-1zM490 461h1v1h-1zM492 463h1v1h-1zM494 464h1v1h-1zM496 465h1v1h-1zM498 465h1v1h-1zM500 467h1v1h-1zM501 468h1v1h-1zM503 469h1v1h-1zM505 471h1v1h-1zM507 472h1v1h-1zM509 472h1v1h-1zM511 473h1v1h-1zM513 475h1v1h-1zM514 476h1v1h-1zM516 477h1v1h-1zM517 478h1v1h-1zM519 479h1v1h-1zM520 481h1v1h-1zM522 482h1v1h-1zM524 482h1v1h-1zM526 484h1v1h-1zM527 485h1v1h-1zM529 486h1v1h-1zM530 488h1v1h-1zM532 489h1v1h-1zM534 490h1v1h-1zM536 492h1v1h-1zM538 493h1v1h-1zM540 494h1v1h-1zM542 496h1v1h-1zM544 498h1v1h-1zM546 499h1v1h-1zM548 500h1v1h-1zM550 502h1v1h-1zM551 504h1v1h-1zM553 504h1v1h-1zM555 506h1v1h-1zM556 508h1v1h-1zM558 508h1v1h-1zM560 510h1v1h-1zM561 512h1v1h-1zM563 512h1v1h-1zM565 514h1v1h-1zM566 516h1v1h-1zM568 517h1v1h-1zM570 518h1v1h-1zM572 520h1v1h-1zM573 522h1v1h-1zM575 523h1v1h-1zM577 524h1v1h-1zM579 526h1v1h-1zM580 528h1v1h-1zM582 529h1v1h-1zM584 530h1v1h-1zM586 532h1v1h-1zM587 534h1v1h-1zM589 535h1v1h-1zM590 536h1v1h-1zM592 538h1v1h-1zM593 540h1v1h-1zM595 541h1v1h-1zM597 542h1v1h-1zM599 544h1v1h-1zM600 546h1v1h-1zM602 547h1v1h-1zM603 549h1v1h-1zM605 550h1v1h-1zM606 552h1v1h-1zM608 553h1v1h-1zM609 554h1v1h-1zM611 556h1v1h-1zM612 557h1v1h-1zM614 559h1v1h-1zM615 561h1v1h-1zM617 562h1v1h-1zM618 564h1v1h-1zM619 565h1v1h-1zM620 563h1v1h-1zM620 561h1v1h-1z" fill="#ff00ff"/>
</g>
</svg>
</body></html>
